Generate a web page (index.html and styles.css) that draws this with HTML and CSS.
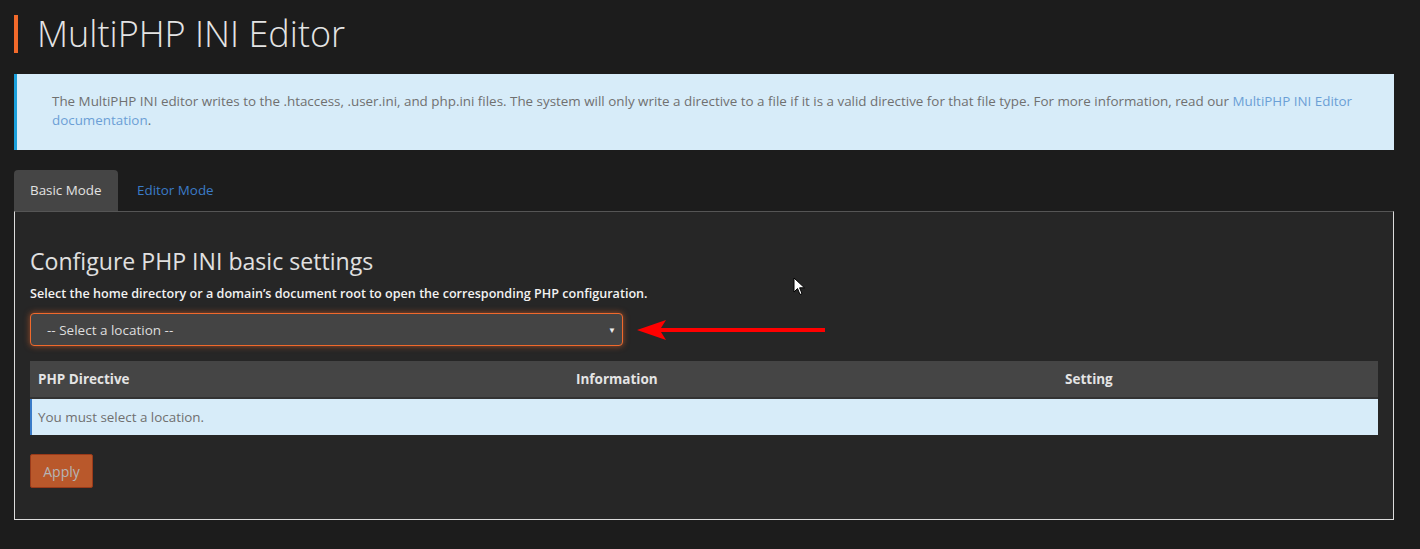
FILE: index.html
```html
<!DOCTYPE html>
<html>
<head>
<meta charset="utf-8">
<link rel="stylesheet" href="styles.css">
</head>
<body>
<div class="page">
  <h1 class="title">MultiPHP INI Editor</h1>
  <div class="info">
    The MultiPHP INI editor writes to the .htaccess, .user.ini, and php.ini files. The system will only write a directive to a file if it is a valid directive for that file type. For more information, read our <a href="#">MultiPHP INI Editor documentation</a>.
  </div>
  <div class="tabs">
    <div class="tab active">Basic Mode</div>
    <div class="tab">Editor Mode</div>
  </div>
  <div class="panel">
    <h2 class="heading">Configure PHP INI basic settings</h2>
    <div class="label">Select the home directory or a domain’s document root to open the corresponding PHP configuration.</div>
    <div class="select-row">
      <div class="select">
        <span>-- Select a location --</span>
        <span class="caret">▼</span>
      </div>
      <svg class="arrow" width="190" height="22" viewBox="0 0 190 22">
        <path d="M0 11 L29 1 L24 9 L188 9 L188 13 L24 13 L29 21 Z" fill="#f00"/>
      </svg>
    </div>
    <div class="table">
      <div class="thead">
        <div class="c1">PHP Directive</div>
        <div class="c2">Information</div>
        <div class="c3">Setting</div>
      </div>
      <div class="empty">You must select a location.</div>
    </div>
    <button class="apply">Apply</button>
    <svg class="cursor" width="14" height="20" viewBox="0 0 14 20">
      <path d="M1 1 L1 15 L4.5 11.5 L7 17.5 L9 16.6 L6.6 10.8 L11.5 10.8 Z" fill="#fff" stroke="#000" stroke-width="1"/>
    </svg>
  </div>
</div>
</body>
</html>
```
FILE: styles.css
```css
* { box-sizing: border-box; }
html, body { margin: 0; padding: 0; background: #1c1c1c; }
body { font-family: "Open Sans", "Liberation Sans", sans-serif; color: #ddd; }
.page { padding: 15px 26px 0 14px; }
.title {
  margin: 0;
  border-left: 4px solid #f26a2b;
  padding-left: 19px;
  font-size: 36px;
  font-weight: 300;
  line-height: 38px;
  height: 38px;
  color: #e4e4e4;
}
.info {
  margin-top: 21px;
  background: #d7ecf9;
  border-left: 3px solid #1aa0dc;
  padding: 18px 36px 20px 35px;
  font-size: 13.4px;
  line-height: 19px;
  color: #707070;
  height: 76px;
}
.info a { color: #6b9fd6; text-decoration: none; }
.tabs { display: flex; margin-top: 20px; height: 41px; }
.tab {
  font-size: 13.4px;
  padding: 0 16px;
  line-height: 41px;
  color: #3b7bc7;
  border-radius: 4px 4px 0 0;
  margin-right: 3px;
  white-space: nowrap;
}
.tab.active { background: #454545; color: #e2e2e2; width: 104px; padding: 0 0 0 16px; }
.panel {
  position: relative;
  background: #262626;
  border: 1px solid #dcdcdc;
  border-top-color: #555;
  height: 309px;
  padding: 34px 15px 0 15px;
}
.heading {
  margin: 0;
  font-size: 23.1px;
  font-weight: 400;
  line-height: 30px;
  color: #e0e0e0;
}
.label {
  margin-top: 9px;
  font-size: 12.6px;
  font-weight: 600;
  color: #f2f2f2;
  line-height: 18px;
}
.select-row { display: flex; align-items: center; margin-top: 10px; }
.select {
  width: 593px;
  height: 33px;
  background: #444;
  border: 1px solid #f0692c;
  border-radius: 4px;
  box-shadow: 0 0 6px rgba(240,105,44,0.6);
  display: flex;
  align-items: center;
  justify-content: space-between;
  padding: 0 6px 0 16px;
  font-size: 13.5px;
  color: #dedede;
}
.caret { font-size: 8px; color: #eee; }
.arrow { margin-left: 14px; }
.table { margin-top: 15px; }
.thead {
  display: flex;
  background: #454545;
  height: 38px;
  border-bottom: 2px solid #333;
  font-size: 13.5px;
  font-weight: 700;
  color: #e4e4e4;
  align-items: center;
}
.thead div { padding: 0 8px; }
.c1 { width: 538px; }
.c2 { width: 489px; }
.c3 { flex: 1; }
.empty {
  background: #d7ecf9;
  border-left: 2px solid #3a7bc8;
  height: 36px;
  line-height: 36px;
  padding-left: 6px;
  font-size: 13.4px;
  color: #707070;
}
.apply {
  margin-top: 19px;
  display: block;
  width: 63px;
  height: 34px;
  background: #b9582b;
  border: 1px solid #9a3a1a;
  border-radius: 2px;
  font-family: inherit;
  font-size: 14px;
  color: #b5b5b5;
  padding: 0;
}
.cursor { position: absolute; left: 778px; top: 65px; }
```
